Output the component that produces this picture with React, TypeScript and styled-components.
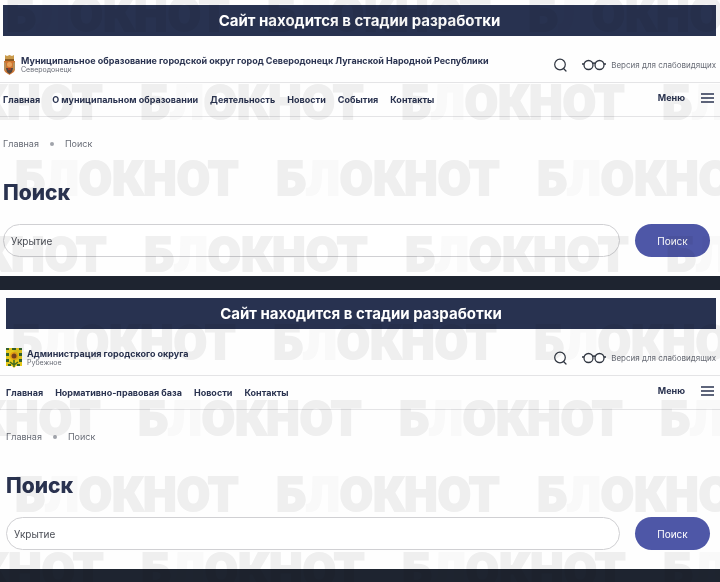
import styled, { createGlobalStyle } from 'styled-components';

type Site = {
  id: string;
  title: string;
  city: string;
  links: string[];
  emblem: 'miner' | 'sunflower';
};

const sites: Site[] = [
  {
    id: 'severodonetsk',
    title: 'Муниципальное образование городской округ город Северодонецк Луганской Народной Республики',
    city: 'Северодонецк',
    links: ['Главная', 'О муниципальном образовании', 'Деятельность', 'Новости', 'События', 'Контакты'],
    emblem: 'miner',
  },
  {
    id: 'rubezhnoe',
    title: 'Администрация городского округа',
    city: 'Рубежное',
    links: ['Главная', 'Нормативно-правовая база', 'Новости', 'Контакты'],
    emblem: 'sunflower',
  },
];

// rows of the repeated brand: left shift and the space above the row
const brandRows = [
  { shift: 6, above: 0 },
  { shift: -121, above: 52 },
  { shift: 15, above: 40 },
  { shift: -117, above: 40 },
  { shift: 12, above: 52 },
  { shift: -123, above: 40 },
  { shift: 15, above: 40 },
  { shift: -120, above: 40 },
];

const MinerEmblem = () => (
  <svg width="13" height="20" viewBox="0 0 13 20" aria-hidden="true">
    <path d="M2 0l2 1 2.500-1 2.500 1 2-1v5H2z" fill="#c99a4b" />
    <path d="M2 4h9v2H2z" fill="#8a5a22" />
    <path d="M1 6h11v8c0 3-3 4-5.500 6C4 18 1 17 1 14z" fill="#cf7430" />
    <path d="M1 7l2 1v8l-2-2zM12 7l-2 1v8l2-2z" fill="#b5905c" />
    <circle cx="6.500" cy="9.500" r="2.500" fill="#e9a35a" />
    <path d="M3 13h7l-1 4-2.500 2L4 17z" fill="#54463d" />
    <path d="M5 13h3v2H5z" fill="#a33b22" />
  </svg>
);

const SunflowerEmblem = () => (
  <svg width="16" height="20" viewBox="0 0 16 20" aria-hidden="true">
    <path d="M0 0h16v18H10l-2 2-2-2H0z" fill="#e6c81c" />
    <path
      d="M0 0h3v2H0zM6 0h4v2H6zM13 0h3v2h-3zM0 5h3v3H0zM13 5h3v3h-3zM0 11h3v3H0zM13 11h3v3h-3zM2 16h3v2H2zM11 16h3v2h-3z"
      fill="#35632c"
    />
    <path d="M8 11v8M8 17l-4-3M8 17l4-3" stroke="#3e6b22" strokeWidth="1.500" fill="none" />
    <circle cx="8" cy="8" r="4" fill="#e8a413" />
    <circle cx="8" cy="8" r="2.500" fill="#7b421c" />
  </svg>
);

const SearchIcon = () => (
  <svg width="13" height="14" viewBox="0 0 13 14" fill="none" stroke="#2f3540" strokeWidth="1.200" aria-hidden="true">
    <circle cx="6" cy="6.500" r="5.300" />
    <path d="M9.500 10.500l2.500 2.500" strokeLinecap="round" />
  </svg>
);

const GlassesIcon = () => (
  <svg width="24" height="12" viewBox="0 0 24 12" fill="none" stroke="#2f3540" strokeWidth="1.300" aria-hidden="true">
    <circle cx="6.500" cy="6" r="4.500" />
    <circle cx="17.500" cy="6" r="4.500" />
    <path d="M10.500 4.500q1.500-1 3 0M0 5h2M22 5h2" />
  </svg>
);

const BurgerIcon = () => (
  <svg width="13" height="10" viewBox="0 0 13 10" stroke="#2a3350" strokeWidth="1.300" aria-hidden="true">
    <path d="M0 1h13M0 5h13M0 9h13" />
  </svg>
);

const App = () => (
  <>
    <GlobalStyle />
    <Page>
      {sites.map((site, index) => (
        <SiteBlock key={site.id} $lower={index > 0}>
          <Content $lower={index > 0}>
            <Banner>Сайт находится в стадии разработки</Banner>
            <Header $lower={index > 0}>
              <Brand href="#">
                {site.emblem === 'miner' ? <MinerEmblem /> : <SunflowerEmblem />}
                <span>
                  <BrandTitle>{site.title}</BrandTitle>
                  <BrandCity>{site.city}</BrandCity>
                </span>
              </Brand>
              <Tools>
                <IconButton type="button" aria-label="Поиск по сайту">
                  <SearchIcon />
                </IconButton>
                <VisionLink href="#">
                  <GlassesIcon />
                  Версия для слабовидящих
                </VisionLink>
              </Tools>
            </Header>
            <NavBar $lower={index > 0}>
              <Nav>
                {site.links.map((link) => (
                  <a key={link} href="#">{link}</a>
                ))}
              </Nav>
              <MenuButton type="button">
                Меню
                <BurgerIcon />
              </MenuButton>
            </NavBar>
            <Crumbs>
              <a href="#">Главная</a>
              <Dot />
              <span>Поиск</span>
            </Crumbs>
            <Heading>Поиск</Heading>
            <SearchForm onSubmit={(event) => event.preventDefault()}>
              <SearchInput type="text" aria-label="Поисковый запрос" defaultValue="Укрытие" />
              <SubmitButton type="submit">Поиск</SubmitButton>
            </SearchForm>
          </Content>
          <Footer />
        </SiteBlock>
      ))}
      <BrandLayer aria-hidden="true">
        {brandRows.map((row, index) => (
          <BrandRow key={index} $shift={row.shift} $above={row.above}>
            {[0, 1, 2, 3].map((n) => (
              <BrandWord key={n}>
                Б<span>Л</span>ОКНОТ
              </BrandWord>
            ))}
          </BrandRow>
        ))}
      </BrandLayer>
    </Page>
  </>
);

const GlobalStyle = createGlobalStyle`
  *, *::before, *::after {
    box-sizing: border-box;
  }

  body {
    margin: 0;
    background: #fefefe;
    color: #2a3350;
    font-family: Inter, "Noto Sans", sans-serif;
  }

  a {
    color: inherit;
    text-decoration: none;
  }

  button, input {
    font-family: inherit;
  }
`;

const Page = styled.div`
  position: relative;
  display: flex;
  flex-direction: column;
  min-height: 100vh;
  overflow: hidden;
  background: #fefefe;
`;

const SiteBlock = styled.section<{ $lower: boolean }>`
  display: flex;
  flex-direction: column;
  flex-grow: ${({ $lower }) => ($lower ? 1 : 0)};
`;

const Content = styled.div<{ $lower: boolean }>`
  padding: ${({ $lower }) => ($lower ? '8px 4px 19px 6px' : '5px 4px 19px 3px')};
`;

const Banner = styled.div`
  height: 31px;
  background: #283250;
  color: #fff;
  font-size: 15px;
  font-weight: 700;
  line-height: 31px;
  text-align: center;
`;

const Row = styled.div<{ $lower: boolean }>`
  display: flex;
  align-items: center;
  justify-content: space-between;
  margin: 0 -4px 0 ${({ $lower }) => ($lower ? '-6px' : '-3px')};
  padding: 0 4px 0 ${({ $lower }) => ($lower ? '6px' : '3px')};
  border-bottom: 1px solid #e4e4e6;
`;

const Header = styled(Row)`
  height: 47px;
  padding-top: 12px;
`;

const Brand = styled.a`
  display: flex;
  align-items: center;
  gap: 5px;
`;

const BrandTitle = styled.strong`
  display: block;
  font-size: 9px;
  font-weight: 700;
  line-height: 10px;
  white-space: nowrap;
`;

const BrandCity = styled.span`
  display: block;
  color: #686c76;
  font-size: 7px;
  line-height: 8px;
`;

const Tools = styled.div`
  display: flex;
  align-items: center;
  gap: 15px;
`;

const IconButton = styled.button`
  display: flex;
  padding: 0;
  border: 0;
  background: none;
  cursor: pointer;
`;

const VisionLink = styled.a`
  display: flex;
  align-items: center;
  gap: 5px;
  color: #686c76;
  font-size: 8px;
  white-space: nowrap;
`;

const NavBar = styled(Row)`
  height: 34px;
`;

const Nav = styled.nav`
  display: flex;
  gap: 12px;
  font-size: 9px;
  font-weight: 700;
  line-height: 12px;
  white-space: nowrap;
`;

const MenuButton = styled.button`
  display: flex;
  align-items: center;
  gap: 16px;
  margin: 0 2px 4px 0;
  padding: 0;
  border: 0;
  background: none;
  color: inherit;
  font-size: 9px;
  font-weight: 700;
  cursor: pointer;
`;

const Crumbs = styled.div`
  display: flex;
  align-items: center;
  gap: 11px;
  margin-top: 21px;
  color: #686c76;
  font-size: 9px;
  line-height: 12px;
`;

const Dot = styled.span`
  width: 4px;
  height: 4px;
  border-radius: 50%;
  background: #a0a3aa;
`;

const Heading = styled.h1`
  margin: 31px 0 19px;
  font-size: 21px;
  font-weight: 800;
  line-height: 24px;
`;

const SearchForm = styled.form`
  display: flex;
  gap: 15px;
  margin-right: 6px;
`;

const SearchInput = styled.input`
  flex: 1;
  min-width: 0;
  height: 33px;
  padding: 0 7px;
  border: 1px solid #d0d0d3;
  border-radius: 17px;
  background: #fff;
  color: #4b4e56;
  font-size: 10px;
  outline: none;

  &:focus {
    border-color: #4e57a5;
  }
`;

const SubmitButton = styled.button`
  width: 75px;
  height: 33px;
  padding: 0;
  border: 0;
  border-radius: 17px;
  background: #4e57a7;
  color: #fff;
  font-size: 10px;
  cursor: pointer;
`;

const Footer = styled.div`
  flex: 1 0 auto;
  min-height: 14px;
  background: #1e2430;

  ${SiteBlock}:last-of-type & {
    min-height: 13px;
  }
`;

// brand pattern lying over the whole page
const BrandLayer = styled.div`
  position: absolute;
  inset: -4px 0 0;
  overflow: hidden;
  pointer-events: none;
  user-select: none;
  mix-blend-mode: multiply;
`;

const BrandRow = styled.div<{ $shift: number; $above: number }>`
  display: flex;
  gap: 34px;
  height: 36px;
  margin-top: ${({ $above }) => $above}px;
  margin-left: ${({ $shift }) => $shift}px;
`;

const BrandWord = styled.span`
  flex: 0 0 227px;
  min-width: 0;
  color: #f0f0f0;
  font-family: Roboto, "Liberation Sans", sans-serif;
  font-size: 48px;
  font-weight: 900;
  line-height: 38px;
  white-space: nowrap;
  -webkit-text-stroke: 2px #f0f0f0;

  span {
    color: #fafafa;
    -webkit-text-stroke-color: #fafafa;
  }
`;

export default App;
